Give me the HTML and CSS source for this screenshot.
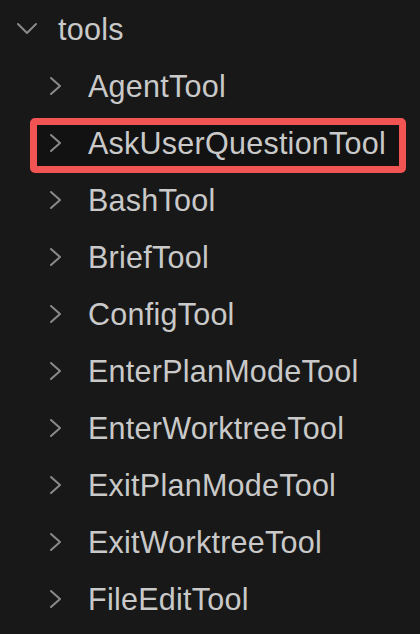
FILE: index.html
```html
<!DOCTYPE html>
<html>
<head>
<meta charset="utf-8">
<link rel="stylesheet" href="styles.css">
</head>
<body>
<ul class="tree">
  <li class="row folder">
    <svg class="chev-down" width="22" height="14" viewBox="0 0 22 14"><polyline points="2,2 11,11 20,2" /></svg>
    <span class="label">tools</span>
  </li>
  <li class="row item"><svg class="chev" width="14" height="20" viewBox="0 0 14 20"><polyline points="2,2 11,10 2,18" /></svg><span class="label">AgentTool</span></li>
  <li class="row item selected"><svg class="chev" width="14" height="20" viewBox="0 0 14 20"><polyline points="2,2 11,10 2,18" /></svg><span class="label">AskUserQuestionTool</span></li>
  <li class="row item"><svg class="chev" width="14" height="20" viewBox="0 0 14 20"><polyline points="2,2 11,10 2,18" /></svg><span class="label">BashTool</span></li>
  <li class="row item"><svg class="chev" width="14" height="20" viewBox="0 0 14 20"><polyline points="2,2 11,10 2,18" /></svg><span class="label">BriefTool</span></li>
  <li class="row item"><svg class="chev" width="14" height="20" viewBox="0 0 14 20"><polyline points="2,2 11,10 2,18" /></svg><span class="label">ConfigTool</span></li>
  <li class="row item"><svg class="chev" width="14" height="20" viewBox="0 0 14 20"><polyline points="2,2 11,10 2,18" /></svg><span class="label">EnterPlanModeTool</span></li>
  <li class="row item"><svg class="chev" width="14" height="20" viewBox="0 0 14 20"><polyline points="2,2 11,10 2,18" /></svg><span class="label">EnterWorktreeTool</span></li>
  <li class="row item"><svg class="chev" width="14" height="20" viewBox="0 0 14 20"><polyline points="2,2 11,10 2,18" /></svg><span class="label">ExitPlanModeTool</span></li>
  <li class="row item"><svg class="chev" width="14" height="20" viewBox="0 0 14 20"><polyline points="2,2 11,10 2,18" /></svg><span class="label">ExitWorktreeTool</span></li>
  <li class="row item"><svg class="chev" width="14" height="20" viewBox="0 0 14 20"><polyline points="2,2 11,10 2,18" /></svg><span class="label">FileEditTool</span></li>
</ul>
</body>
</html>
```

FILE: styles.css
```css
html, body {
  margin: 0;
  padding: 0;
  background: #181818;
  height: 100%;
  overflow: hidden;
}
.tree {
  list-style: none;
  margin: 0;
  padding: 1px 0 0 0;
  font-family: "Liberation Sans", Arial, sans-serif;
  font-size: 30.5px;
  letter-spacing: 0.25px;
  color: #c9c9c9;
}
.row {
  display: flex;
  align-items: center;
  height: 57px;
  line-height: 57px;
  position: relative;
  z-index: 0;
}
.folder {
  padding-left: 16px;
}
.folder .label {
  margin-left: 20px;
}
.item {
  padding-left: 49px;
}
.item .label {
  margin-left: 25px;
}
svg polyline {
  fill: none;
  stroke: #8a8a8a;
  stroke-width: 2;
  stroke-linecap: round;
  stroke-linejoin: round;
}
.chev-down {
  margin-top: -2px;
}
.chev {
  margin-top: -1px;
}
.selected::before {
  content: "";
  position: absolute;
  left: 30px;
  top: 3px;
  width: 362px;
  height: 41px;
  border: 7px solid #f25353;
  border-radius: 5px;
  background: #121212;
  z-index: -1;
}
```
